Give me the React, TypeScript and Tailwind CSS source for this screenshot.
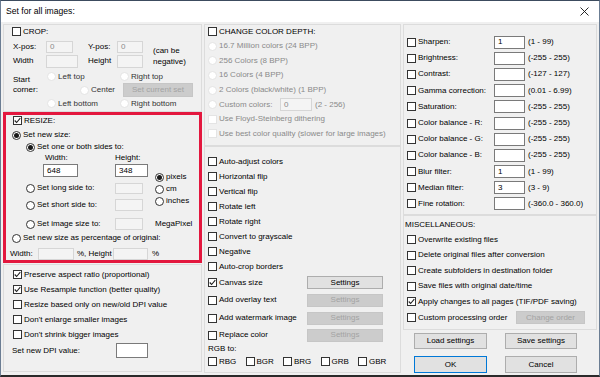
import React from 'react'

type BoxProps = { checked?: boolean; disabled?: boolean }

function Check({ checked = false, disabled = false }: BoxProps) {
    return (
        <span
            className={`flex h-[9px] w-[9px] shrink-0 items-center justify-center border bg-white ${
                disabled ? 'border-[#e4e4e4]' : 'border-[#333333]'
            }`}
        >
            {checked && (
                <svg width="7" height="7" viewBox="0 0 7 7">
                    <path d="M0.7 3.5 L2.6 5.5 L6.3 1.1" fill="none" stroke="#222" strokeWidth="1.1" />
                </svg>
            )}
        </span>
    )
}

function Radio({ checked = false, disabled = false }: BoxProps) {
    return (
        <span
            className={`flex h-[9px] w-[9px] shrink-0 items-center justify-center rounded-full border bg-white ${
                disabled ? 'border-[#e4e4e4]' : 'border-[#333333]'
            }`}
        >
            {checked && <span className="h-[5px] w-[5px] rounded-full bg-[#1a1a1a]" />}
        </span>
    )
}

function Field({ value = '', disabled = false, className = '' }: { value?: string; disabled?: boolean; className?: string }) {
    return (
        <div
            className={`flex shrink-0 items-center border pl-[3px] ${
                disabled ? 'border-[#d6d6d6] bg-[#f4f4f4] text-[#8a8a8a]' : 'border-[#7a7a7a] bg-white text-black'
            } ${className}`}
        >
            {value}
        </div>
    )
}

function Btn({ label, disabled = false, primary = false, className = '' }: { label: string; disabled?: boolean; primary?: boolean; className?: string }) {
    let tone = 'border-[#adadad] bg-[#e1e1e1] text-black'
    if (disabled) tone = 'border-[#c6c6c6] bg-[#cccccc] text-[#a3a3a3]'
    if (primary) tone = 'border-[#0078d7] bg-[#e1e1e1] text-black'
    return <div className={`flex shrink-0 items-center justify-center border ${tone} ${className}`}>{label}</div>
}

function CheckLine({ label, checked, disabled, className = '' }: { label: string; checked?: boolean; disabled?: boolean; className?: string }) {
    return (
        <div className={`flex items-center gap-[2px] whitespace-nowrap ${disabled ? 'text-[#8a8a8a]' : ''} ${className}`}>
            <Check checked={checked} disabled={disabled} />
            <span>{label}</span>
        </div>
    )
}

// dim = faint control with normal-looking label (the crop corner radios)
function RadioLine({
    label,
    checked,
    disabled,
    dim,
    className = '',
}: {
    label: string
    checked?: boolean
    disabled?: boolean
    dim?: boolean
    className?: string
}) {
    return (
        <div
            className={`flex items-center gap-[2px] whitespace-nowrap ${disabled ? 'text-[#8a8a8a]' : ''} ${
                dim ? 'text-[#333333]' : ''
            } ${className}`}
        >
            <Radio checked={checked} disabled={disabled || dim} />
            <span>{label}</span>
        </div>
    )
}

const filters = [
    { label: 'Sharpen:', value: '1', range: '(1 - 99)' },
    { label: 'Brightness:', value: '', range: '(-255 - 255)' },
    { label: 'Contrast:', value: '', range: '(-127 - 127)' },
    { label: 'Gamma correction:', value: '', range: '(0.01 - 6.99)' },
    { label: 'Saturation:', value: '', range: '(-255 - 255)' },
    { label: 'Color balance - R:', value: '', range: '(-255 - 255)' },
    { label: 'Color balance - G:', value: '', range: '(-255 - 255)' },
    { label: 'Color balance - B:', value: '', range: '(-255 - 255)' },
    { label: 'Blur filter:', value: '1', range: '(1 - 99)' },
    { label: 'Median filter:', value: '3', range: '(3 - 9)' },
    { label: 'Fine rotation:', value: '', range: '(-360.0 - 360.0)' },
]

const transforms = [
    'Auto-adjust colors',
    'Horizontal flip',
    'Vertical flip',
    'Rotate left',
    'Rotate right',
    'Convert to grayscale',
    'Negative',
    'Auto-crop borders',
]

const misc = [
    { label: 'Overwrite existing files', checked: false },
    { label: 'Delete original files after conversion', checked: false },
    { label: 'Create subfolders in destination folder', checked: false },
    { label: 'Save files with original date/time', checked: false },
    { label: 'Apply changes to all pages (TIF/PDF saving)', checked: true },
]

export default function App() {
    return (
        <div className="flex h-[377px] w-[600px] flex-col overflow-hidden border-x border-t border-x-[#6b7d93] border-t-[#3c4b5e] border-b-2 border-b-[#2a2a2a] bg-[#f0f0f0] font-['Liberation_Sans',Arial,sans-serif] text-[8px] leading-none text-black">
            {/* title bar */}
            <div className="flex h-[21px] shrink-0 items-center justify-between bg-white pl-[5px] pr-[10px]">
                <span className="text-[8.6px]">Set for all images:</span>
                <svg width="9" height="9" viewBox="0 0 9 9">
                    <path d="M0.5 0.5 L8.5 8.5 M8.5 0.5 L0.5 8.5" stroke="#111" strokeWidth="0.9" />
                </svg>
            </div>

            <div className="flex flex-1 gap-[2px] pl-[2px] pt-[2px]">
                {/* left column */}
                <div className="flex w-[199px] flex-col">
                    <div className="h-[88px] border border-[#dcdcdc] pl-[8px]">
                        <CheckLine label="CROP:" className="h-[13px]" />
                        <div className="mt-[2px] flex">
                            <div className="flex w-[131px] flex-col pl-[1px]">
                                <div className="flex h-[14px] items-center">
                                    <span className="w-[33px]">X-pos:</span>
                                    <Field value="0" disabled className="h-[12px] w-[27px]" />
                                    <span className="ml-[15px] w-[29px]">Y-pos:</span>
                                    <Field value="0" disabled className="h-[12px] w-[26px]" />
                                </div>
                                <div className="flex h-[14px] items-center">
                                    <span className="w-[33px]">Width</span>
                                    <Field disabled className="h-[13px] w-[32px]" />
                                    <span className="ml-[10px] w-[29px]">Height</span>
                                    <Field disabled className="h-[13px] w-[26px]" />
                                </div>
                            </div>
                            <div className="ml-[10px] pt-[5px] leading-[11px]">
                                (can be
                                <br />
                                negative)
                            </div>
                        </div>
                        <div className="mt-[2px] flex pl-[1px]">
                            <div className="w-[34px] pt-[5px] leading-[10px]">
                                Start
                                <br />
                                corner:
                            </div>
                            <div className="flex flex-col">
                                <div className="flex h-[13px] items-center">
                                    <RadioLine label="Left top" dim className="w-[73px]" />
                                    <RadioLine label="Right top" dim />
                                </div>
                                <div className="flex h-[14px] items-center">
                                    <RadioLine label="Center" dim className="ml-[33px] w-[43px]" />
                                    <Btn label="Set current set" disabled className="h-[14px] w-[70px]" />
                                </div>
                                <div className="flex h-[13px] items-center">
                                    <RadioLine label="Left bottom" dim className="w-[73px]" />
                                    <RadioLine label="Right bottom" dim />
                                </div>
                            </div>
                        </div>
                    </div>

                    {/* resize */}
                    <div className="h-[151px] border-[3px] border-[#e3173e] pl-[6px]">
                        <CheckLine label="RESIZE:" checked className="h-[11px] pl-[1px]" />
                        <RadioLine label="Set new size:" checked className="mt-[3px] h-[12px]" />
                        <RadioLine label="Set one or both sides to:" checked className="h-[12px] pl-[14px]" />
                        <div className="flex h-[59px]">
                            <div className="flex w-[143px] flex-col pl-[14px]">
                                <div className="flex h-[10px] items-center">
                                    <span className="ml-[19px] w-[70px]">Width:</span>
                                    <span>Height:</span>
                                </div>
                                <div className="mt-[1px] flex h-[13px] items-center">
                                    <Field value="648" className="ml-[17px] h-[13px] w-[35px]" />
                                    <Field value="348" className="ml-[37px] h-[13px] w-[33px]" />
                                </div>
                                <div className="mt-[4px] flex h-[14px] items-center">
                                    <RadioLine label="Set long side to:" className="w-[89px]" />
                                    <Field disabled className="h-[11px] w-[28px]" />
                                </div>
                                <div className="mt-[3px] flex h-[14px] items-center">
                                    <RadioLine label="Set short side to:" className="w-[89px]" />
                                    <Field disabled className="h-[12px] w-[28px]" />
                                </div>
                            </div>
                            <div className="flex flex-col pt-[18px]">
                                <RadioLine label="pixels" checked className="h-[12px]" />
                                <RadioLine label="cm" className="h-[12px]" />
                                <RadioLine label="inches" className="h-[12px]" />
                            </div>
                        </div>
                        <div className="mt-[5px] flex h-[14px] items-center pl-[14px]">
                            <RadioLine label="Set image size to:" className="w-[89px]" />
                            <Field disabled className="h-[12px] w-[28px]" />
                            <span className="ml-[12px]">MegaPixel</span>
                        </div>
                        <RadioLine label="Set new size as percentage of original:" className="mt-[1px] h-[12px]" />
                        <div className="mt-[4px] flex h-[12px] items-center">
                            <span className="ml-[-2px] w-[28px]">Width:</span>
                            <Field disabled className="h-[12px] w-[36px]" />
                            <span className="ml-[3px] w-[36px]">%, Height</span>
                            <Field disabled className="h-[12px] w-[35px]" />
                            <span className="ml-[4px]">%</span>
                        </div>
                    </div>

                    <div className="mt-[1px] flex h-[108px] flex-col border border-[#dcdcdc] pl-[9px] pt-[2px]">
                        <CheckLine label="Preserve aspect ratio (proportional)" checked className="h-[15px]" />
                        <CheckLine label="Use Resample function (better quality)" checked className="h-[15px]" />
                        <CheckLine label="Resize based only on new/old DPI value" className="h-[15px]" />
                        <CheckLine label="Don't enlarge smaller images" className="h-[15px]" />
                        <CheckLine label="Don't shrink bigger images" className="h-[15px]" />
                        <div className="flex h-[17px] items-center">
                            <span className="ml-[-1px] w-[104px]">Set new DPI value:</span>
                            <Field className="h-[15px] w-[32px]" />
                        </div>
                    </div>
                </div>

                {/* middle column */}
                <div className="flex w-[197px] flex-col">
                    <div className="h-[122px] border border-[#dcdcdc] pl-[3px]">
                        <CheckLine label="CHANGE COLOR DEPTH:" className="h-[13px]" />
                        <div className="mt-[1px] flex flex-col">
                            <RadioLine label="16.7 Million colors (24 BPP)" disabled className="h-[14.6px]" />
                            <RadioLine label="256 Colors (8 BPP)" disabled className="h-[14.6px]" />
                            <RadioLine label="16 Colors (4 BPP)" disabled className="h-[14.6px]" />
                            <RadioLine label="2 Colors (black/white) (1 BPP)" disabled className="h-[14.6px]" />
                            <div className="flex h-[14.6px] items-center text-[#8a8a8a]">
                                <RadioLine label="Custom colors:" disabled className="w-[72px]" />
                                <Field value="0" disabled className="h-[13px] w-[32px]" />
                                <span className="ml-[3px]">(2 - 256)</span>
                            </div>
                            <CheckLine label="Use Floyd-Steinberg dithering" disabled className="h-[14.6px]" />
                            <CheckLine label="Use best color quality (slower for large images)" disabled className="h-[14.6px]" />
                        </div>
                    </div>
                    <div className="flex h-[227px] flex-col border border-[#dcdcdc] pl-[3px] pt-[7px]">
                        {transforms.map((t) => (
                            <CheckLine key={t} label={t} className="h-[15px]" />
                        ))}
                        <div className="flex h-[17px] items-center">
                            <CheckLine label="Canvas size" checked className="w-[99px]" />
                            <Btn label="Settings" className="h-[13px] w-[76px]" />
                        </div>
                        <div className="flex h-[18px] items-center">
                            <CheckLine label="Add overlay text" className="w-[99px]" />
                            <Btn label="Settings" disabled className="h-[13px] w-[76px]" />
                        </div>
                        <div className="flex h-[18px] items-center">
                            <CheckLine label="Add watermark image" className="w-[99px]" />
                            <Btn label="Settings" disabled className="h-[13px] w-[76px]" />
                        </div>
                        <div className="flex h-[16px] items-center">
                            <CheckLine label="Replace color" className="w-[99px]" />
                            <Btn label="Settings" disabled className="h-[13px] w-[76px]" />
                        </div>
                        <div className="flex h-[11px] items-center">RGB to:</div>
                        <div className="flex h-[15px] items-center">
                            {['RBG', 'BGR', 'BRG', 'GRB', 'GBR'].map((c) => (
                                <CheckLine key={c} label={c} className="w-[37.5px]" />
                            ))}
                        </div>
                    </div>
                </div>

                {/* right column */}
                <div className="flex w-[194px] flex-col">
                    <div className="h-[191px] border border-[#dcdcdc] pl-[3px] pt-[9px]">
                        {filters.map((f) => (
                            <div key={f.label} className="flex h-[16.2px] items-center">
                                <CheckLine label={f.label} className="w-[87px]" />
                                <Field value={f.value} className="h-[13px] w-[31px]" />
                                <span className="ml-[3px]">{f.range}</span>
                            </div>
                        ))}
                    </div>
                    <div className="h-[115px] border border-[#dcdcdc] pl-[1px] pt-[2px]">
                        <div className="flex h-[14px] items-center">MISCELLANEOUS:</div>
                        <div className="flex flex-col pl-[2px]">
                            {misc.map((m) => (
                                <CheckLine key={m.label} label={m.label} checked={m.checked} className="h-[15.5px]" />
                            ))}
                            <div className="flex h-[16px] items-center">
                                <CheckLine label="Custom processing order" className="w-[109px]" />
                                <Btn label="Change order" disabled className="h-[13px] w-[69px]" />
                            </div>
                        </div>
                    </div>
                    <div className="mt-[3px] flex flex-col gap-[7px] pl-[11px]">
                        <div className="flex gap-[18px]">
                            <Btn label="Load settings" className="h-[16px] w-[73px]" />
                            <Btn label="Save settings" className="h-[16px] w-[72px]" />
                        </div>
                        <div className="flex gap-[18px]">
                            <Btn label="OK" primary className="h-[17px] w-[73px]" />
                            <Btn label="Cancel" className="h-[17px] w-[72px]" />
                        </div>
                    </div>
                </div>
            </div>
        </div>
    )
}
